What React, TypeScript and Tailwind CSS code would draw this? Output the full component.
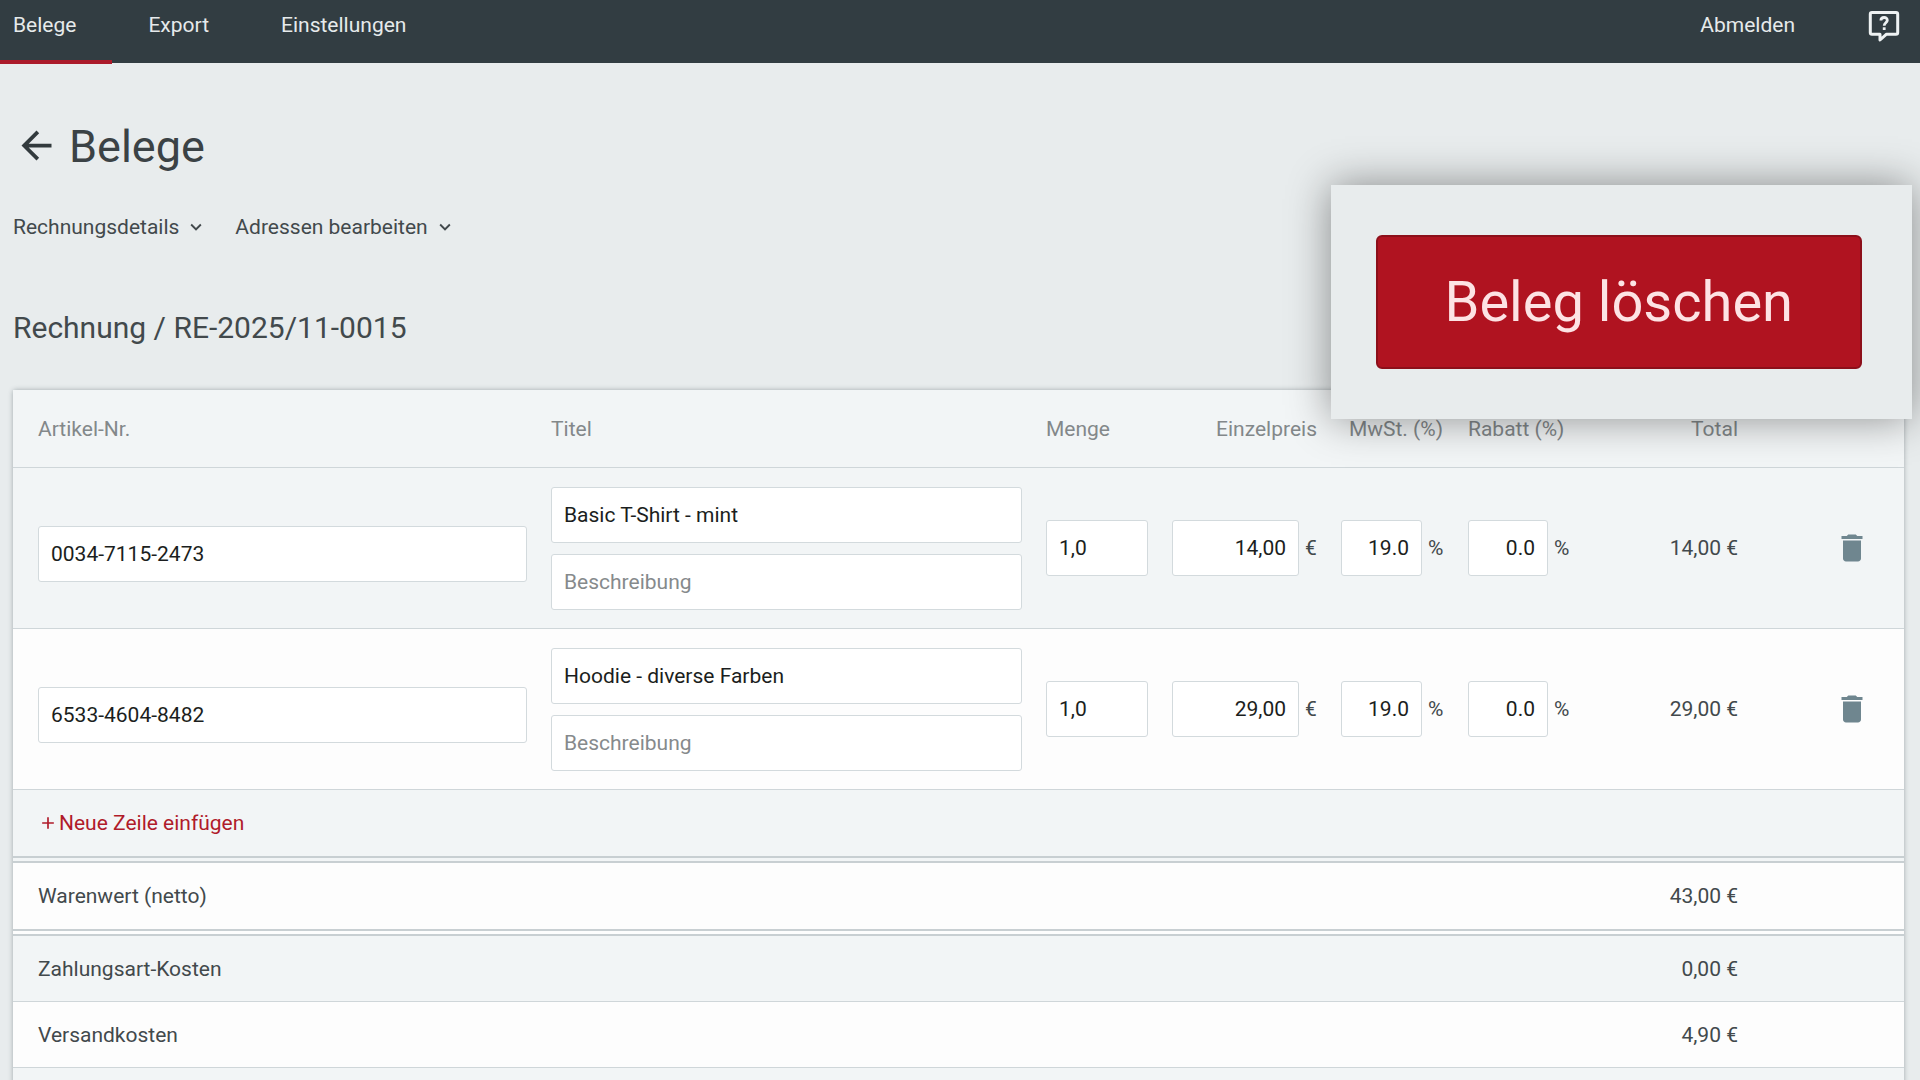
import { useState, type ReactNode } from "react";
import { MdAdd, MdArrowBack, MdDelete, MdKeyboardArrowDown } from "react-icons/md";

type Item = {
  id: number;
  sku: string;
  title: string;
  quantity: string;
  price: string;
  vat: string;
  discount: string;
  total: string;
};

const items: Item[] = [
  { id: 1, sku: "0034-7115-2473", title: "Basic T-Shirt - mint", quantity: "1,0", price: "14,00", vat: "19.0", discount: "0.0", total: "14,00 €" },
  { id: 2, sku: "6533-4604-8482", title: "Hoodie - diverse Farben", quantity: "1,0", price: "29,00", vat: "19.0", discount: "0.0", total: "29,00 €" },
];

function Field({
  label,
  initial = "",
  placeholder,
  alignRight = false,
}: {
  label: string;
  initial?: string;
  placeholder?: string;
  alignRight?: boolean;
}) {
  const [value, setValue] = useState(initial);
  return (
    <input
      type="text"
      aria-label={label}
      value={value}
      placeholder={placeholder}
      onChange={(e) => setValue(e.target.value)}
      className={
        "block h-14 w-full min-w-0 rounded-[3px] border border-[#d3dadd] bg-white px-3 text-[#1b1e20] outline-none placeholder:text-[#868a8c] placeholder:opacity-100 focus:border-[#6f868f] " +
        (alignRight ? "text-right" : "text-left")
      }
    />
  );
}

function WithUnit({ unit, children }: { unit: string; children: ReactNode }) {
  return (
    <div className="flex items-center gap-1.5">
      {children}
      <span className={unit === "€" ? "w-3 shrink-0" : "w-4 shrink-0"}>{unit}</span>
    </div>
  );
}

function HelpIcon() {
  return (
    <svg viewBox="0 0 32 32" className="size-8" fill="none" aria-hidden="true">
      <path
        d="M4 2.5H28A1.7 1.7 0 0 1 29.700 4.200V22.500A1.700 1.700 0 0 1 28 24.200H18.500L12 30V24.200H4A1.700 1.700 0 0 1 2.300 22.500V4.200A1.700 1.700 0 0 1 4 2.500Z"
        stroke="#eef2f3"
        strokeWidth="3"
        strokeLinejoin="round"
      />
      <path d="M12.900 10.600C12.900 6.500 19.300 6.500 19.300 10.300C19.300 12.700 16.200 12.900 16.200 15.700" stroke="#eef2f3" strokeWidth="2.800" />
      <rect x="14.800" y="17.300" width="2.800" height="2.700" fill="#eef2f3" />
    </svg>
  );
}

function SummaryRow({ label, amount, tone, line }: { label: string; amount: string; tone: string; line: string }) {
  return (
    <tr className={tone}>
      <th scope="row" colSpan={6} className={"h-[66px] pl-[25px] text-left font-normal " + line}>
        {label}
      </th>
      <td className={"pr-[13px] text-right " + line}>{amount}</td>
      <td className={line} />
    </tr>
  );
}

export default function App() {
  const thin = "border-b border-[#cfd6d9]";
  const double = "border-b-[7px] border-double border-[#c8cfd2]";
  return (
    <div className="relative h-screen overflow-hidden bg-[#e8eced] font-['Roboto',sans-serif] text-[21px] leading-7 text-[#42494c]">
      <header className="flex h-[63px] items-start justify-between bg-[#323d42] text-[#e6eaeb]">
        <nav className="flex">
          <a href="#belege" aria-current="page" className="h-16 border-b-4 border-[#ab1a2a] pt-[11px] pr-9 pl-[13px]">
            Belege
          </a>
          <a href="#export" className="h-16 px-9 pt-[11px]">
            Export
          </a>
          <a href="#einstellungen" className="h-16 px-9 pt-[11px]">
            Einstellungen
          </a>
        </nav>
        <div className="flex items-start pr-5">
          <a href="#abmelden" className="px-9 pt-[11px]">
            Abmelden
          </a>
          <button type="button" aria-label="Hilfe" className="ml-[37px] pt-2.5">
            <HelpIcon />
          </button>
        </div>
      </header>

      <main className="px-[13px] pt-14">
        <div className="flex items-center gap-2.5">
          <button type="button" aria-label="Zurück" className="ml-px pb-1 text-[#323a3d]">
            <MdArrowBack className="size-[45px]" />
          </button>
          <h1 className="text-[45px] leading-[56px] text-[#3b4245]">Belege</h1>
        </div>

        <div className="mt-[38px] flex gap-7">
          <button type="button" className="flex items-center gap-1.5">
            Rechnungsdetails
            <MdKeyboardArrowDown className="size-[22px]" />
          </button>
          <button type="button" className="flex items-center gap-1.5">
            Adressen bearbeiten
            <MdKeyboardArrowDown className="size-[22px]" />
          </button>
        </div>

        <h2 className="mt-[67px] mb-[42px] text-[30px] leading-10">Rechnung / RE-2025/11-0015</h2>

        <div className="mr-[3px] rounded-[3px] shadow-[0_0_5px_rgba(70,85,92,0.45)]">
          <table className="w-full table-fixed border-separate border-spacing-0">
            <colgroup>
              <col />
              <col className="w-[495px]" />
              <col className="w-[126px]" />
              <col className="w-[169px]" />
              <col className="w-[127px]" />
              <col className="w-[126px]" />
              <col className="w-[169px]" />
              <col className="w-[153px]" />
            </colgroup>
            <thead>
              <tr className="bg-[#f2f5f6] text-[#83888a] *:border-b *:border-[#cfd6d9] *:font-normal *:whitespace-nowrap">
                <th scope="col" className="h-[78px] pl-[25px] text-left">Artikel-Nr.</th>
                <th scope="col" className="px-3 text-left">Titel</th>
                <th scope="col" className="px-3 text-left">Menge</th>
                <th scope="col" className="px-3 text-right">Einzelpreis</th>
                <th scope="col" className="px-[13px] text-right">MwSt. (%)</th>
                <th scope="col" className="pl-3 text-left">Rabatt (%)</th>
                <th scope="col" className="pr-[13px] text-right">Total</th>
                <th scope="col" aria-label="Aktionen" />
              </tr>
            </thead>
            <tbody>
              {items.map((item) => (
                <tr key={item.id} className="h-[161px] odd:bg-[#f2f5f6] even:bg-[#fdfdfd] *:border-b *:border-[#cfd6d9]">
                  <td className="pt-[11px] pr-3 pl-[25px]">
                    <Field label="Artikel-Nr." initial={item.sku} />
                  </td>
                  <td className="px-3">
                    <div className="flex flex-col gap-[11px]">
                      <Field label="Titel" initial={item.title} />
                      <Field label="Beschreibung" placeholder="Beschreibung" />
                    </div>
                  </td>
                  <td className="px-3">
                    <Field label="Menge" initial={item.quantity} />
                  </td>
                  <td className="px-3">
                    <WithUnit unit="€">
                      <Field label="Einzelpreis" initial={item.price} alignRight />
                    </WithUnit>
                  </td>
                  <td className="px-3">
                    <WithUnit unit="%">
                      <Field label="MwSt. (%)" initial={item.vat} alignRight />
                    </WithUnit>
                  </td>
                  <td className="px-3">
                    <WithUnit unit="%">
                      <Field label="Rabatt (%)" initial={item.discount} alignRight />
                    </WithUnit>
                  </td>
                  <td className="pr-[13px] text-right">{item.total}</td>
                  <td className="pr-[34px]">
                    <button type="button" aria-label="Zeile löschen" className="ml-auto block text-[#6f868f]">
                      <MdDelete className="size-9" />
                    </button>
                  </td>
                </tr>
              ))}
              <tr className="bg-[#f2f5f6]">
                <td colSpan={8} className={"h-[73px] pl-[25px] " + double}>
                  <button type="button" className="flex items-center gap-px text-[#b01b2a]">
                    <MdAdd className="size-5" />
                    Neue Zeile einfügen
                  </button>
                </td>
              </tr>
            </tbody>
            <tbody>
              <SummaryRow label="Warenwert (netto)" amount="43,00 €" tone="bg-[#fdfdfd] *:h-[73px]" line={double} />
              <SummaryRow label="Zahlungsart-Kosten" amount="0,00 €" tone="bg-[#f2f5f6]" line={thin} />
              <SummaryRow label="Versandkosten" amount="4,90 €" tone="bg-[#fdfdfd]" line={thin} />
              <tr className="bg-[#f2f5f6]">
                <td colSpan={8} className="h-[66px]" />
              </tr>
            </tbody>
          </table>
        </div>
      </main>

      <aside className="absolute top-[185px] right-2 bg-[#e8eced] pt-[50px] pr-[50px] pb-[50px] pl-[45px] shadow-[0_0_40px_rgba(0,0,0,0.42)]">
        <button
          type="button"
          className="block rounded-md border-2 border-[#8c0f1a] bg-[#b01320] px-[67px] py-[33px] text-[56px] leading-[64px] text-[#fde3e4]"
        >
          Beleg löschen
        </button>
      </aside>
    </div>
  );
}
